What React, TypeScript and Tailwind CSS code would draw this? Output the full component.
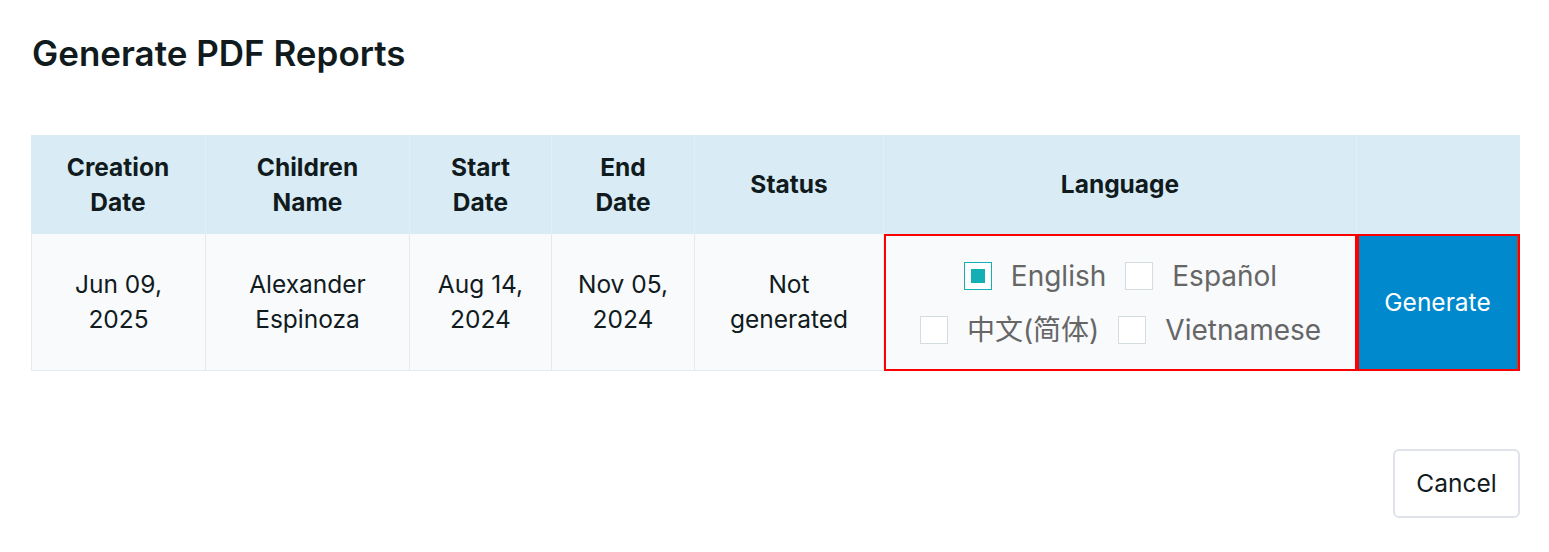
import React from "react";

const cols = "grid-cols-[175px_204px_142px_143px_189px_473px_163px]";

function Check({ checked, label }: { checked?: boolean; label: string }) {
  return (
    <div className="flex items-center gap-[19px]">
      <span
        className={
          "flex h-[28px] w-[28px] items-center justify-center border bg-white " +
          (checked ? "border-[#14aeb5]" : "border-[#d3dde0]")
        }
      >
        {checked && <span className="h-[14px] w-[14px] bg-[#14aeb5]" />}
      </span>
      <span className="text-[28px] leading-[32px] text-[#666666]">{label}</span>
    </div>
  );
}

export default function App() {
  return (
    <div
      className="min-h-[552px] w-[1549px] bg-white text-[#111b1e]"
      style={{ fontFamily: "Inter, 'Noto Sans CJK SC', sans-serif" }}
    >
      <div className="px-[32px] pt-[32px]">
        <h1 className="text-[35px] font-semibold leading-[42px]">Generate PDF Reports</h1>
      </div>
      <div className="ml-[31px] mt-[61px] w-[1489px]">
        <div className={"grid " + cols + " h-[99px] bg-[#d9ecf5] text-[24.5px] font-bold leading-[35px]"}>
          {["Creation\nDate", "Children\nName", "Start\nDate", "End\nDate", "Status", "Language", ""].map((h, i) => (
            <div
              key={i}
              className={
                "flex items-center justify-center whitespace-pre-line text-center " +
                (i < 6 ? "border-r border-[#e6eef2]" : "")
              }
            >
              {h}
            </div>
          ))}
        </div>
        <div className={"grid " + cols + " h-[137px] bg-[#f8fafc] text-[24.5px] leading-[35px]"}>
          {["Jun 09,\n2025", "Alexander\nEspinoza", "Aug 14,\n2024", "Nov 05,\n2024", "Not\ngenerated"].map((t, i) => (
            <div
              key={i}
              className={
                "flex items-center justify-center whitespace-pre-line border-b border-r border-[#e6eaed] text-center " +
                (i === 0 ? "border-l" : "")
              }
            >
              {t}
            </div>
          ))}
          <div className="flex items-center justify-center border-2 border-[#ff0000] px-[4px]">
            <div className="flex flex-wrap justify-center gap-x-[19px] gap-y-[22px]">
              <Check checked label="English" />
              <Check label="Español" />
              <Check label="中文(简体)" />
              <Check label="Vietnamese" />
            </div>
          </div>
          <div className="border-2 border-[#ff0000] bg-white">
            <button className="flex h-full w-full items-center justify-center border-r-2 border-[#5a6b78] bg-[#0089cc] text-[24.5px] text-white">
              Generate
            </button>
          </div>
        </div>
        <div className="mt-[78px] flex justify-end">
          <button className="h-[69px] w-[127px] rounded-[6px] border-2 border-[#dfe2e8] bg-white text-[24.5px] text-[#111b1e]">
            Cancel
          </button>
        </div>
      </div>
    </div>
  );
}
